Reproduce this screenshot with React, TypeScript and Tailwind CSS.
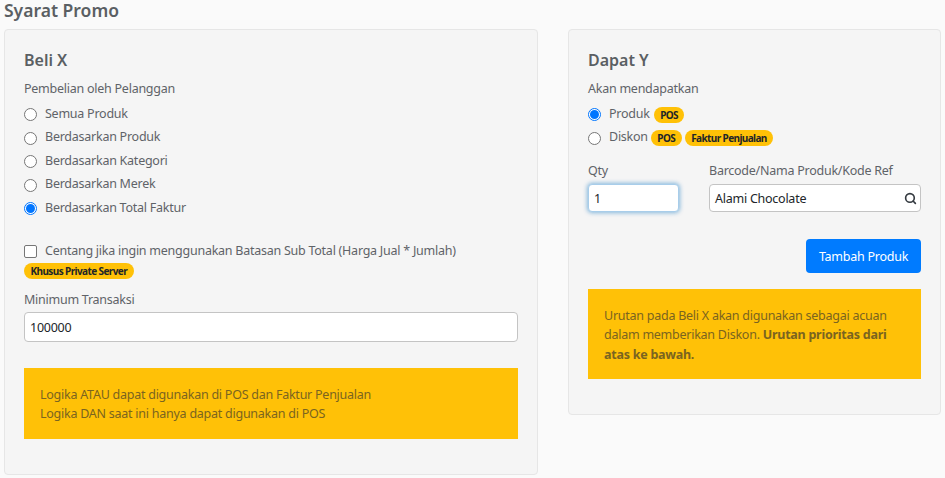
import React from "react";
import { Search } from "lucide-react";

function Badge({ children, className = "" }: { children: React.ReactNode; className?: string }) {
  return (
    <span className={`inline-flex h-4 items-center rounded-full bg-[#ffc107] px-[6.5px] text-[10px] font-bold leading-none tracking-[-0.6px] text-[#212529] ${className}`}>
      {children}
    </span>
  );
}

function Radio({ checked }: { checked?: boolean }) {
  if (checked) {
    return (
      <span className="flex h-[13px] w-[13px] shrink-0 items-center justify-center rounded-full border border-[#0075ff] bg-white">
        <span className="h-[9px] w-[9px] rounded-full bg-[#0075ff]" />
      </span>
    );
  }
  return <span className="h-[13px] w-[13px] shrink-0 rounded-full border border-[#767676] bg-white" />;
}

function RadioRow({ label, checked, children }: { label: string; checked?: boolean; children?: React.ReactNode }) {
  return (
    <div className="flex h-[23.5px] items-center">
      <Radio checked={checked} />
      <span className="ml-[8px] mb-[1px]">{label}</span>
      {children}
    </div>
  );
}

export default function App() {
  return (
    <div className="h-[478px] overflow-hidden bg-[#fafafa] pl-[4px] text-[12.5px] tracking-[-0.25px] text-[#5f6368] font-['Noto_Sans',sans-serif]">
      <h2 className="h-[29px] text-[17.5px] font-semibold leading-[21px] tracking-normal text-[#5a5f63]">Syarat Promo</h2>
      <div className="flex items-start">
        <div className="h-[446px] w-[534px] rounded-[4px] border border-[#e6e6e6] bg-[#f5f5f5] px-[19px] pt-[19px]">
          <h3 className="mb-[8px] text-[16px] font-semibold leading-[22px] tracking-normal text-[#5a5f63]">Beli X</h3>
          <div className="mb-[4px] leading-[20px]">Pembelian oleh Pelanggan</div>
          <RadioRow label="Semua Produk" />
          <RadioRow label="Berdasarkan Produk" />
          <RadioRow label="Berdasarkan Kategori" />
          <RadioRow label="Berdasarkan Merek" />
          <RadioRow label="Berdasarkan Total Faktur" checked />
          <div className="mt-[21px] flex h-[20px] items-center">
            <span className="h-[13px] w-[13px] shrink-0 rounded-[2px] border border-[#767676] bg-white" />
            <span className="ml-[8px] mb-[1px]">Centang jika ingin menggunakan Batasan Sub Total (Harga Jual * Jumlah)</span>
          </div>
          <Badge className="mt-[1px] align-top">Khusus Private Server</Badge>
          <div className="mt-[10px] leading-[20px]">Minimum Transaksi</div>
          <div className="mt-[2px] flex h-[30px] items-center rounded-[4px] border border-[#c4c4c4] bg-white px-[5px] pt-[2px] text-[#212529]">100000</div>
          <div className="mt-[26px] h-[71px] bg-[#ffc107] px-[16px] pt-[16.5px] leading-[19.5px] text-[#7a6420]">
            <div>Logika ATAU dapat digunakan di POS dan Faktur Penjualan</div>
            <div>Logika DAN saat ini hanya dapat digunakan di POS</div>
          </div>
        </div>
        <div className="ml-[30px] h-[386px] w-[373px] rounded-[4px] border border-[#e6e6e6] bg-[#f5f5f5] px-[19px] pt-[19px]">
          <h3 className="mb-[8px] text-[16px] font-semibold leading-[22px] tracking-normal text-[#5a5f63]">Dapat Y</h3>
          <div className="mb-[4px] leading-[20px]">Akan mendapatkan</div>
          <RadioRow label="Produk" checked>
            <Badge className="ml-[4px]">POS</Badge>
          </RadioRow>
          <RadioRow label="Diskon">
            <Badge className="ml-[3px]">POS</Badge>
            <Badge className="ml-[3px]">Faktur Penjualan</Badge>
          </RadioRow>
          <div className="mt-[10px] flex gap-[30px]">
            <div className="w-[91px]">
              <div className="mb-[2px] leading-[22px]">Qty</div>
              <div className="flex h-[28px] items-center rounded-[4px] border border-[#a8cdea] bg-white px-[5px] pt-[2px] text-[#212529] shadow-[0_0_4px_1px_rgba(0,110,190,0.45)]">1</div>
            </div>
            <div className="flex-1">
              <div className="mb-[2px] leading-[22px]">Barcode/Nama Produk/Kode Ref</div>
              <div className="flex h-[28px] items-center justify-between rounded-[4px] border border-[#c4c4c4] bg-white pl-[5px] pr-[3px] text-[#212529]">
                <span className="pt-[2px]">Alami Chocolate</span>
                <Search size={13} strokeWidth={3} className="text-[#343a40]" />
              </div>
            </div>
          </div>
          <div className="mt-[27px] flex justify-end">
            <button className="h-[34px] w-[115px] rounded-[4px] bg-[#007bff] pt-[2px] text-center text-white">Tambah Produk</button>
          </div>
          <div className="mt-[16px] h-[90px] bg-[#ffc107] px-[16px] pt-[16.5px] leading-[19.5px] text-[#7a6420]">
            Urutan pada Beli X akan digunakan sebagai acuan dalam memberikan Diskon. <b className="font-bold">Urutan prioritas dari atas ke bawah.</b>
          </div>
        </div>
      </div>
    </div>
  );
}
